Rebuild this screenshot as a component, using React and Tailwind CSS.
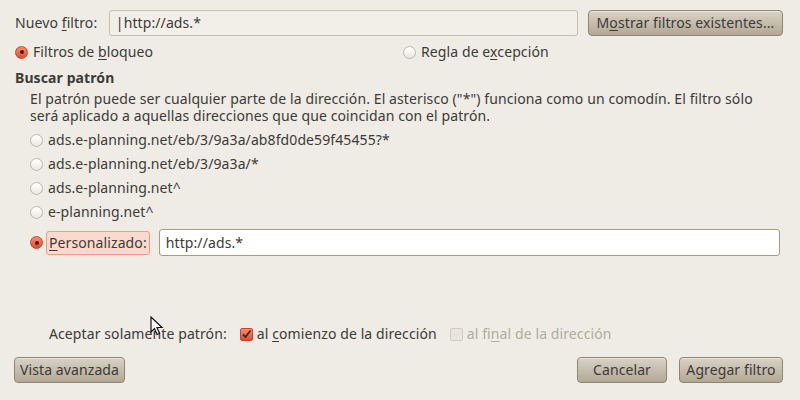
import React from 'react';

const btn =
  'h-[26px] px-2 rounded-[4px] border border-[#8e8472] bg-gradient-to-b from-[#d9d2c6] to-[#b3a895] text-[#3c3a37] shadow-[inset_0_1px_0_rgba(255,255,255,0.45)] flex items-center justify-center whitespace-nowrap';

function Radio({ checked }) {
  if (checked) {
    return (
      <span className="w-[13px] h-[13px] rounded-full border border-[#c9442a] bg-gradient-to-b from-[#fb8a6c] to-[#e24a2c] flex items-center justify-center shrink-0">
        <span className="w-[4px] h-[4px] rounded-full bg-[#3a2420]" />
      </span>
    );
  }
  return (
    <span className="w-[13px] h-[13px] rounded-full border border-[#bdb6aa] bg-gradient-to-b from-white to-[#ebe7e0] shrink-0" />
  );
}

function U({ children }) {
  return <span className="underline underline-offset-2 decoration-1">{children}</span>;
}

function Cursor() {
  return (
    <svg className="absolute left-[150px] top-[316px]" width="14" height="20" viewBox="0 0 14 20">
      <path d="M1 1 L1 16 L4.5 12.5 L7 18.5 L9.5 17.5 L7 11.5 L12 11.5 Z" fill="#fff" stroke="#111" strokeWidth="1.2" />
    </svg>
  );
}

export default function App() {
  const options = [
    'ads.e-planning.net/eb/3/9a3a/ab8fd0de59f45455?*',
    'ads.e-planning.net/eb/3/9a3a/*',
    'ads.e-planning.net^',
    'e-planning.net^',
  ];

  return (
    <div
      className="relative w-[800px] h-[400px] bg-[#efebe5] text-[#3c3b37] text-[14px] tracking-[0.1px] leading-[16px] overflow-hidden"
      style={{ fontFamily: '"Noto Sans", "Open Sans", sans-serif' }}
    >
      <div className="flex items-center pt-[10px] pl-[15px] pr-[17px]">
        <span className="w-[94px]">
          Nuevo <U>f</U>iltro:
        </span>
        <div className="w-[470px] h-[26px] rounded-[3px] border border-[#c8bfae] bg-[#f2eee8] flex items-center px-[6px]">
          |http://ads.*
        </div>
        <button className={btn + ' ml-[10px] w-[195px]'}>
          M<U>o</U>strar filtros existentes...
        </button>
      </div>

      <div className="flex items-center mt-[7px] pl-[15px] h-[18px]">
        <div className="flex items-center gap-[5px] w-[388px]">
          <Radio checked />
          <span>
            Filtros de <U>b</U>loqueo
          </span>
        </div>
        <div className="flex items-center gap-[5px]">
          <Radio />
          <span>
            Regla de e<U>x</U>cepción
          </span>
        </div>
      </div>

      <div className="pl-[15px] mt-[9px] font-bold">Buscar patrón</div>

      <div className="pl-[30px] pr-[10px] mt-[4px] flex flex-col">
        <span className="h-[17px] leading-[17px]">
          El patrón puede ser cualquier parte de la dirección. El asterisco ("*") funciona como un comodín. El filtro sólo
        </span>
        <span className="h-[17px] leading-[17px]">
          será aplicado a aquellas direcciones que que coincidan con el patrón.
        </span>
      </div>

      <div className="pl-[30px] pr-[20px] mt-[8px] flex flex-col gap-[8px]">
        {options.map((o) => (
          <div key={o} className="flex items-center gap-[5px] h-[16px]">
            <Radio />
            <span>{o}</span>
          </div>
        ))}
        <div className="flex items-center mt-[1px]">
          <Radio checked />
          <span className="ml-[3px] h-[24px] px-[2px] flex items-center rounded-[3px] border border-[#f19b86] bg-[#fcd9cd]">
            <U>P</U>ersonalizado:
          </span>
          <div className="ml-[9px] flex-1 h-[27px] rounded-[3px] border border-[#a89c86] bg-white flex items-center px-[6px]">
            http://ads.*
          </div>
        </div>
      </div>

      <div className="flex items-center pl-[49px] mt-[69px] h-[18px]">
        <span>Aceptar solamente patrón:</span>
        <span className="ml-[13px] w-[13px] h-[13px] rounded-[2px] border border-[#c9442a] bg-gradient-to-b from-[#fb8a6c] to-[#e24a2c] flex items-center justify-center">
          <svg width="11" height="11" viewBox="0 0 11 11">
            <path d="M2 5.5 L4.5 8 L9.5 1.5" fill="none" stroke="#3a2420" strokeWidth="1.8" />
          </svg>
        </span>
        <span className="ml-[4px]">
          al <U>c</U>omienzo de la dirección
        </span>
        <span className="ml-[13px] w-[13px] h-[13px] rounded-[2px] border border-[#d3ccc0] bg-[#e9e5de]" />
        <span className="ml-[4px] text-[#b3ab9f]">
          al fi<U>n</U>al de la dirección
        </span>
      </div>

      <div className="flex items-center pr-[17px] pl-[14px] mt-[14px]">
        <button className={btn + ' w-[111px]'}>Vista avanzada</button>
        <div className="flex-1" />
        <button className={btn + ' w-[90px]'}>Cancelar</button>
        <button className={btn + ' ml-[12px] w-[104px]'}>Agregar filtro</button>
      </div>

      <Cursor />
    </div>
  );
}
